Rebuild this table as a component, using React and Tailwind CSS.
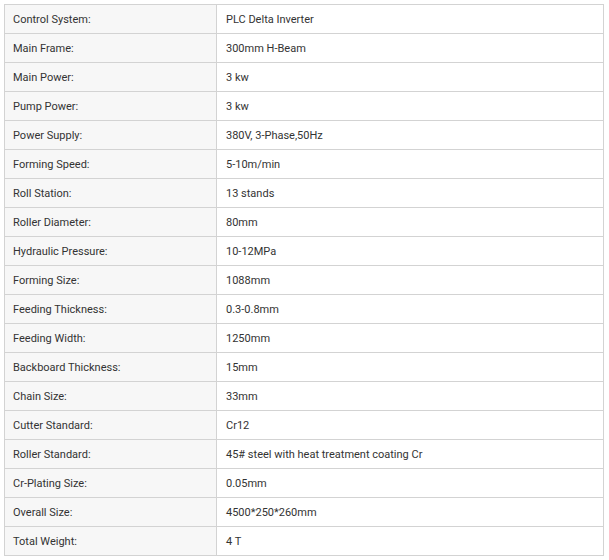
const specs = [
  ["Control System:", "PLC Delta Inverter"],
  ["Main Frame:", "300mm H-Beam"],
  ["Main Power:", "3 kw"],
  ["Pump Power:", "3 kw"],
  ["Power Supply:", "380V, 3-Phase,50Hz"],
  ["Forming Speed:", "5-10m/min"],
  ["Roll Station:", "13 stands"],
  ["Roller Diameter:", "80mm"],
  ["Hydraulic Pressure:", "10-12MPa"],
  ["Forming Size:", "1088mm"],
  ["Feeding Thickness:", "0.3-0.8mm"],
  ["Feeding Width:", "1250mm"],
  ["Backboard Thickness:", "15mm"],
  ["Chain Size:", "33mm"],
  ["Cutter Standard:", "Cr12"],
  ["Roller Standard:", "45# steel with heat treatment coating Cr"],
  ["Cr-Plating Size:", "0.05mm"],
  ["Overall Size:", "4500*250*260mm"],
  ["Total Weight:", "4 T"],
];

export default function App() {
  return (
    <div className="bg-white p-1 font-['Roboto',sans-serif] text-[11px] text-[#333]">
      <table className="w-[600px] border-collapse">
        <tbody>
          {specs.map(([label, value]) => (
            <tr key={label} className="h-[29px]">
              <td className="w-[212px] border border-[#d3d3d3] bg-[#f7f7f7] pl-2 pt-[2px]">
                {label}
              </td>
              <td className="border border-[#d3d3d3] bg-white pl-[9px] pt-[2px]">{value}</td>
            </tr>
          ))}
        </tbody>
      </table>
    </div>
  );
}
